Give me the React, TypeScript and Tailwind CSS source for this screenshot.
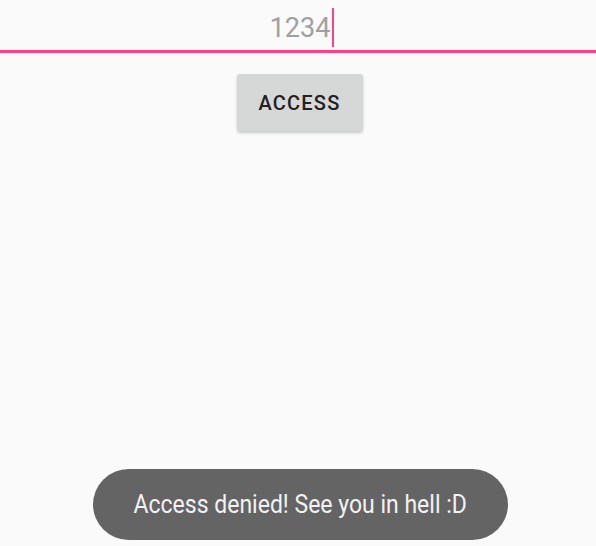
import React from 'react';

const App: React.FC = () => {
  return (
    <div className="relative w-[596px] h-[546px] bg-[#fafafa] overflow-hidden font-['Roboto',sans-serif]">
      {/* PIN field */}
      <div className="h-[50px] flex items-end justify-center pb-[3px]">
        <div className="flex items-center text-[27px] leading-[36px] text-[#a0a0a0] ml-[8px]">
          <span>1234</span>
          <span className="w-[2px] h-[39px] bg-[#ff4081] ml-[2px]"></span>
        </div>
      </div>
      <div className="h-[3px] bg-[#ff4081]"></div>

      <div className="flex justify-center mt-[21px] ml-[3px]">
        <button className="w-[126px] h-[57px] bg-[#d6d7d7] rounded-[3px] shadow-[0_2px_3px_rgba(0,0,0,0.2)] text-[20px] font-medium tracking-[1.2px] text-[#212121]">
          ACCESS
        </button>
      </div>

      {/* Toast */}
      <div className="absolute left-[93px] top-[469px] w-[415px] h-[71px] rounded-full bg-[#646464] flex items-center justify-center">
        <span className="text-[25px] text-[#f2f2f2] scale-x-[0.92] whitespace-nowrap inline-block">
          Access denied! See you in hell :D
        </span>
      </div>
    </div>
  );
};

export default App;
